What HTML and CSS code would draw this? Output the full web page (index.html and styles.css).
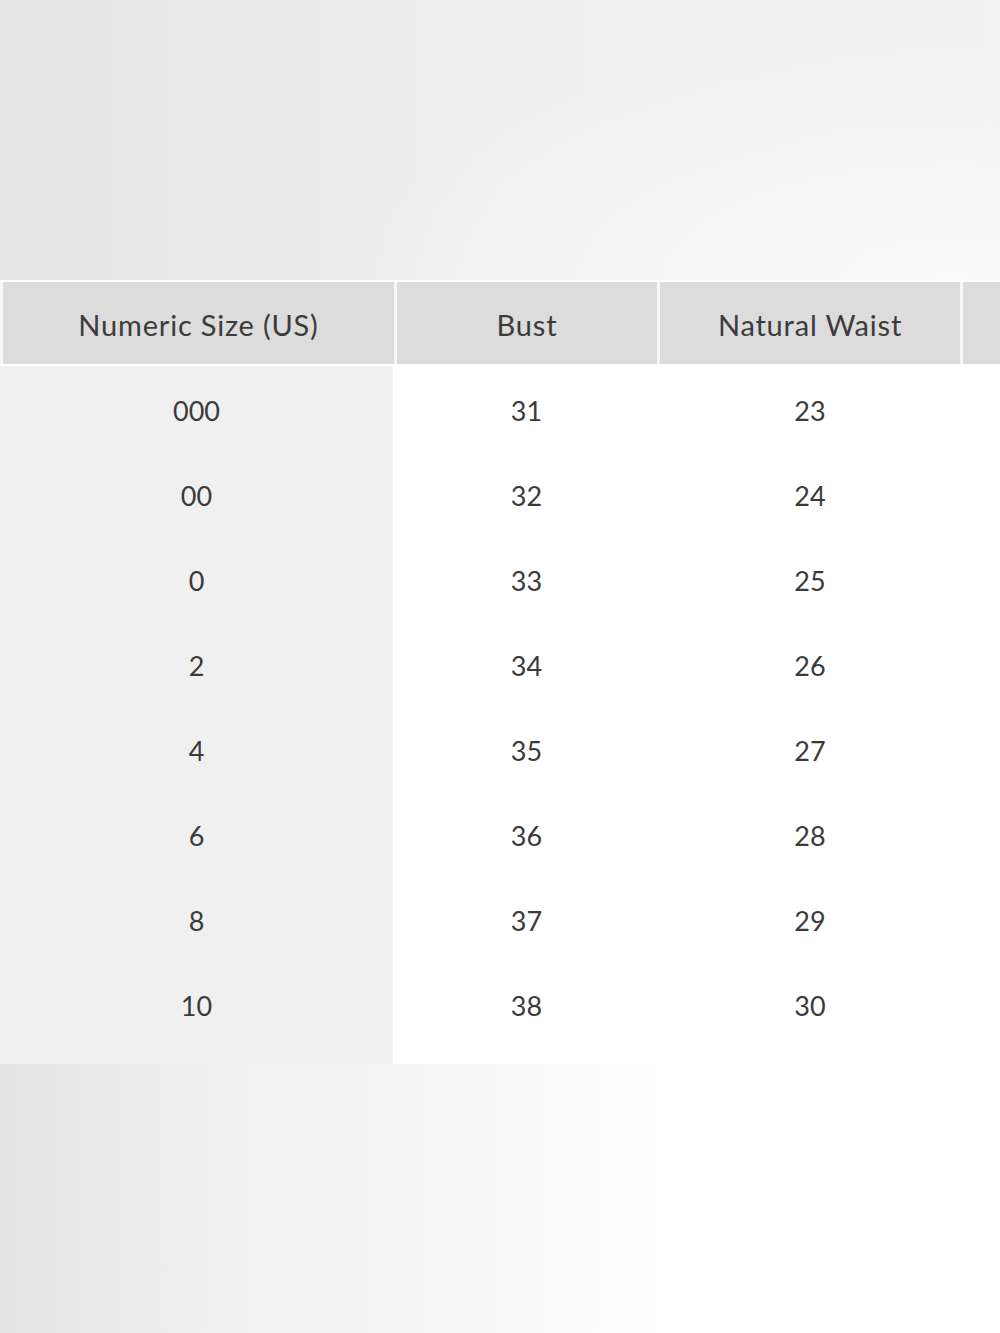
FILE: index.html
```html
<!DOCTYPE html>
<html lang="en">
<head>
<meta charset="utf-8">
<title>Size Chart</title>
<link rel="stylesheet" href="styles.css">
</head>
<body>
<div class="page">
  <div class="top-bg"></div>
  <div class="chart">
    <div class="head">
      <div class="hcell c1">Numeric Size (US)</div>
      <div class="hcell c2">Bust</div>
      <div class="hcell c3">Natural Waist</div>
      <div class="hcell c4"></div>
    </div>
    <div class="rows">
      <div class="row"><div class="cell k">000</div><div class="cell">31</div><div class="cell">23</div><div class="cell"></div></div>
      <div class="row"><div class="cell k">00</div><div class="cell">32</div><div class="cell">24</div><div class="cell"></div></div>
      <div class="row"><div class="cell k">0</div><div class="cell">33</div><div class="cell">25</div><div class="cell"></div></div>
      <div class="row"><div class="cell k">2</div><div class="cell">34</div><div class="cell">26</div><div class="cell"></div></div>
      <div class="row"><div class="cell k">4</div><div class="cell">35</div><div class="cell">27</div><div class="cell"></div></div>
      <div class="row"><div class="cell k">6</div><div class="cell">36</div><div class="cell">28</div><div class="cell"></div></div>
      <div class="row"><div class="cell k">8</div><div class="cell">37</div><div class="cell">29</div><div class="cell"></div></div>
      <div class="row"><div class="cell k">10</div><div class="cell">38</div><div class="cell">30</div><div class="cell"></div></div>
      <div class="row tail"><div class="cell k"></div><div class="cell"></div><div class="cell"></div><div class="cell"></div></div>
    </div>
  </div>
  <div class="bottom-bg"></div>
</div>
</body>
</html>
```

FILE: styles.css
```css
html, body {
  margin: 0;
  padding: 0;
  background: #ffffff;
}
.page {
  width: 1000px;
  height: 1333px;
  overflow: hidden;
  display: flex;
  flex-direction: column;
  font-family: "Lato", "Open Sans", sans-serif;
  color: #3b3b3b;
}
.top-bg {
  height: 280px;
  flex: none;
  background:
    radial-gradient(ellipse 70% 100% at 95% 100%, #fbfbfb 0%, #f6f6f6 40%, rgba(243,243,243,0) 85%),
    linear-gradient(90deg, #e4e4e4 0%, #ebebeb 25%, #efefef 50%, #f1f1f1 100%);
}
.chart {
  flex: none;
  background: #ffffff;
  padding-top: 2px;
}
.head {
  display: grid;
  grid-template-columns: 391px 260px 300px 1fr;
  column-gap: 3px;
  padding-left: 3px;
  height: 82px;
  background: #f7f7f7;
}
.hcell {
  background: #dcdcdc;
  display: flex;
  align-items: center;
  justify-content: center;
  font-size: 29px;
  letter-spacing: 0.8px;
  padding-top: 3px;
  box-sizing: border-box;
}
.rows {
  padding-top: 2px;
}
.row {
  display: grid;
  grid-template-columns: 393px 267px 300px 1fr;
  height: 85px;
}
.row.tail {
  height: 18px;
}
.cell {
  display: flex;
  align-items: center;
  justify-content: center;
  font-size: 27px;
  padding-top: 3px;
  box-sizing: border-box;
}
.cell.k {
  background: #f0f0f0;
}
.bottom-bg {
  flex: 1;
  background: linear-gradient(90deg, #e3e3e3 0%, #ececec 12%, #f1f1f1 25%, #f5f5f5 40%, #fafafa 52%, #fdfdfd 62%, #ffffff 70%, #ffffff 100%);
}
```
